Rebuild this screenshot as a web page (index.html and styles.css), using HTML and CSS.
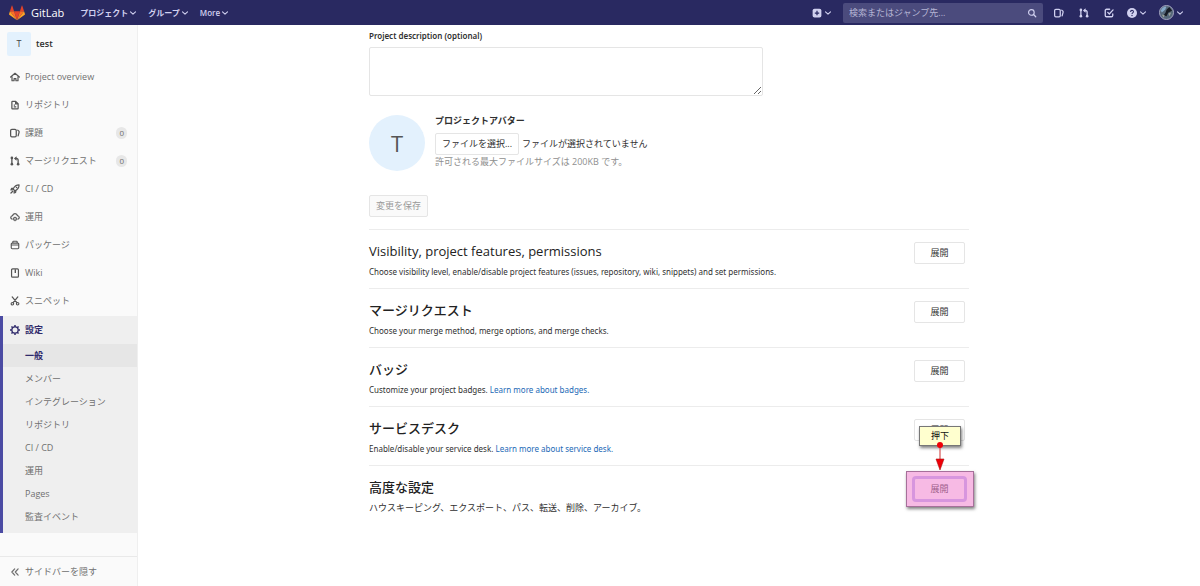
FILE: index.html
```
<!DOCTYPE html>
<html lang="ja">
<head>
  <meta charset="UTF-8" />
  <meta name="viewport" content="width=device-width, initial-scale=1.0"/>
  <title>一般 · 設定 · test · GitLab</title>
  <link rel="stylesheet" href="styles.css">
</head>
<body>
<!-- shared icons -->
<svg class="sprite" aria-hidden="true">
  <symbol id="chevron" viewBox="0 0 8 8"><path d="M1.5 2.8 4 5.2l2.5-2.4" fill="none" stroke="currentColor" stroke-width="1.1" stroke-linecap="round" stroke-linejoin="round"/></symbol>
  <symbol id="issues" viewBox="0 0 16 16"><path d="M3 2h5a2 2 0 0 1 2 2v8a2 2 0 0 1-2 2H3a2 2 0 0 1-2-2V4a2 2 0 0 1 2-2zm9.500 1.500c1.700 1 2.500 2 2 3.500l-1.500 5.500" fill="none" stroke="currentColor" stroke-width="2" stroke-linecap="round"/></symbol>
  <symbol id="merge" viewBox="0 0 16 16"><path d="M3 4v8M8 4h2.500A2.500 2.500 0 0 1 13 6.500V12" fill="none" stroke="currentColor" stroke-width="2.100"/><path d="M10.500 .5v7L6.300 4z" fill="currentColor"/><circle cx="3" cy="3" r="2.100" fill="currentColor"/><circle cx="3" cy="13" r="2.100" fill="currentColor"/><circle cx="13" cy="13" r="2.100" fill="currentColor"/></symbol>
</svg>

<header class="navbar">
  <a href="#" class="brand">
    <svg viewBox="0 0 36 36" aria-hidden="true">
      <path d="M18 34.400 24.600 14H11.400z" fill="#e24329"/>
      <path d="M18 34.400 11.400 14H2.100zM18 34.400 24.600 14h9.300z" fill="#fc6d26"/>
      <path d="M2.100 14 .1 20.200c-.2.600 0 1.200.5 1.500L18 34.400zM33.900 14l2 6.200c.2.600 0 1.200-.5 1.500L18 34.400z" fill="#fca326"/>
      <path d="M2.100 14h9.300l-4-12.300c-.2-.6-1.100-.6-1.300 0zM33.900 14h-9.300l4-12.300c.2-.6 1.100-.6 1.300 0z" fill="#e24329"/>
    </svg>
    <span>GitLab</span>
  </a>
  <nav class="menu">
    <a href="#">プロジェクト <svg class="chevron"><use href="#chevron"/></svg></a>
    <a href="#">グループ <svg class="chevron"><use href="#chevron"/></svg></a>
    <a href="#">More <svg class="chevron"><use href="#chevron"/></svg></a>
  </nav>
  <div class="tools">
    <a href="#" class="tool" aria-label="New">
      <svg class="icon" viewBox="0 0 16 16"><rect x="1" y="1" width="14" height="14" rx="3" fill="currentColor"/><path d="M8 4.500v7M4.500 8h7" stroke="#292961" stroke-width="2"/></svg>
      <svg class="chevron"><use href="#chevron"/></svg>
    </a>
    <form class="search">
      <input type="search" placeholder="検索またはジャンプ先..." aria-label="検索">
      <svg class="icon" viewBox="0 0 16 16"><circle cx="7" cy="7" r="4.500" fill="none" stroke="currentColor" stroke-width="1.800"/><path d="m10.500 10.500 3.500 3.500" stroke="currentColor" stroke-width="2" stroke-linecap="round"/></svg>
    </form>
    <a href="#" class="tool" aria-label="課題"><svg class="icon"><use href="#issues"/></svg></a>
    <a href="#" class="tool" aria-label="マージリクエスト"><svg class="icon"><use href="#merge"/></svg></a>
    <a href="#" class="tool" aria-label="Todo"><svg class="icon" viewBox="0 0 16 16"><path d="M9 2H4a2 2 0 0 0-2 2v8a2 2 0 0 0 2 2h8a2 2 0 0 0 2-2V9.500M6 7l2.500 2.500L14.500 3" fill="none" stroke="currentColor" stroke-width="2.100" stroke-linecap="round"/></svg></a>
    <div class="tool-group">
      <a href="#" class="tool" aria-label="Help">
        <svg class="icon" viewBox="0 0 16 16"><circle cx="8" cy="8" r="8" fill="currentColor"/><path d="M5.700 6.200C5.700 3 10.300 3 10.300 6.100 10.300 7.700 8 7.700 8 9.500" fill="none" stroke="#292961" stroke-width="1.700"/><circle cx="8" cy="11.900" r="1.100" fill="#292961"/></svg>
        <svg class="chevron"><use href="#chevron"/></svg>
      </a>
      <a href="#" class="tool" aria-label="User">
        <svg class="user" viewBox="0 0 16 16"><circle cx="8" cy="8" r="7.500" fill="#56687a" stroke="#a9a9c4"/><path d="M2 6c1-3 3-4.500 6-4.500L6.500 5 3 8z" fill="#86abcc"/><path d="M8 5l3-3 3 4-4 2-2 4-3-1 2-3z" fill="#171c25"/><path d="m3 10 3 1-1 2.500zM10 9l3-1-2 4z" fill="#a0a49a"/></svg>
        <svg class="chevron"><use href="#chevron"/></svg>
      </a>
    </div>
  </div>
</header>

<div class="page">
  <aside class="sidebar">
    <a href="#" class="project"><span class="project-avatar">T</span><strong>test</strong></a>
    <ul class="side-list">
      <li><a href="#"><svg class="icon" viewBox="0 0 16 16"><path d="m1 8 7-6 7 6M3.200 7v7h3.300v-3.500h3V14h3.300V7" fill="none" stroke="currentColor" stroke-width="1.900" stroke-linecap="round" stroke-linejoin="round"/></svg>Project overview</a></li>
      <li><a href="#"><svg class="icon" viewBox="0 0 16 16"><path d="M4 2h5l4 4v7a1 1 0 0 1-1 1H4a1 1 0 0 1-1-1V3a1 1 0 0 1 1-1zM6 8h2M6 11h4M9 2v4h4" fill="none" stroke="currentColor" stroke-width="2"/></svg>リポジトリ</a></li>
      <li><a href="#"><svg class="icon"><use href="#issues"/></svg>課題<span class="count">0</span></a></li>
      <li><a href="#"><svg class="icon"><use href="#merge"/></svg>マージリクエスト<span class="count">0</span></a></li>
      <li><a href="#"><svg class="icon" viewBox="0 0 16 16"><path d="M14.500 1.500C10 1.500 7 4 5 8l3 3c4-2 6.500-5 6.500-9.500zM6 6.500 2.500 7 1.500 9.500 5 9M9.500 10 9 13.500l-2.500 1L7 11" fill="none" stroke="currentColor" stroke-width="1.900" stroke-linejoin="round"/><circle cx="10.500" cy="5.500" r="1.300" fill="currentColor"/><path d="m4.500 11.500-3 3" stroke="currentColor" stroke-width="2" stroke-linecap="round"/></svg>CI / CD</a></li>
      <li><a href="#"><svg class="icon" viewBox="0 0 16 16"><path d="M3.500 11.500C0 10.500 1 6 4 6c1-4.500 7-4.500 8 0 3 0 4 4.500.5 5.500" fill="none" stroke="currentColor" stroke-width="1.900" stroke-linecap="round"/><circle cx="8" cy="11" r="2.200" fill="none" stroke="currentColor" stroke-width="1.900"/><path d="M8 7.500v1.500M8 13v1.800M4.800 9.500l1.400.7M11.200 9.500l-1.400.7" stroke="currentColor" stroke-width="1.300"/></svg>運用</a></li>
      <li><a href="#"><svg class="icon" viewBox="0 0 16 16"><path d="M3.500 5h9A1.500 1.500 0 0 1 14 6.500v6a1.500 1.500 0 0 1-1.500 1.500h-9A1.500 1.500 0 0 1 2 12.500v-6A1.500 1.500 0 0 1 3.500 5zM4.500 5V3a1 1 0 0 1 1-1h5a1 1 0 0 1 1 1v2M2 8h12" fill="none" stroke="currentColor" stroke-width="1.800"/></svg>パッケージ</a></li>
      <li><a href="#"><svg class="icon" viewBox="0 0 16 16"><rect x="2.500" y="1.500" width="11" height="13" rx="1.500" fill="none" stroke="currentColor" stroke-width="1.900"/><path d="M8.500 2v6" stroke="currentColor" stroke-width="2.200"/></svg>Wiki</a></li>
      <li><a href="#"><svg class="icon" viewBox="0 0 16 16"><path d="m3.500 1.500 7.500 9M12.500 1.500 5 10.500" stroke="currentColor" stroke-width="2" stroke-linecap="round"/><circle cx="3.800" cy="12.300" r="2" fill="none" stroke="currentColor" stroke-width="1.800"/><circle cx="12.200" cy="12.300" r="2" fill="none" stroke="currentColor" stroke-width="1.800"/></svg>スニペット</a></li>
      <li class="active">
        <a href="#"><svg class="icon" viewBox="0 0 16 16"><circle cx="8" cy="8" r="5" fill="none" stroke="currentColor" stroke-width="2"/><path d="M8 0v3M8 13v3M0 8h3M13 8h3M2.300 2.300l2.200 2.200M11.500 11.500l2.200 2.200M2.300 13.700l2.200-2.200M11.500 4.500l2.200-2.200" stroke="currentColor" stroke-width="2.400"/></svg>設定</a>
        <ul class="sub-list">
          <li class="current"><a href="#">一般</a></li>
          <li><a href="#">メンバー</a></li>
          <li><a href="#">インテグレーション</a></li>
          <li><a href="#">リポジトリ</a></li>
          <li><a href="#">CI / CD</a></li>
          <li><a href="#">運用</a></li>
          <li><a href="#">Pages</a></li>
          <li><a href="#">監査イベント</a></li>
        </ul>
      </li>
    </ul>
    <button type="button" class="collapse"><svg class="icon" viewBox="0 0 16 16"><path d="M7.500 3 3 8l4.500 5M13 3 8.500 8l4.500 5" fill="none" stroke="currentColor" stroke-width="2" stroke-linecap="round" stroke-linejoin="round"/></svg>サイドバーを隠す</button>
  </aside>

  <main class="content">
    <form class="general">
      <label for="description">Project description (optional)</label>
      <textarea id="description"></textarea>
      <div class="avatar-row">
        <div class="avatar">T</div>
        <div class="avatar-form">
          <h5>プロジェクトアバター</h5>
          <div class="file-row">
            <button type="button" class="btn">ファイルを選択...</button>
            <span>ファイルが選択されていません</span>
          </div>
          <p class="hint">許可される最大ファイルサイズは 200KB です。</p>
        </div>
      </div>
      <button type="submit" class="btn save" disabled>変更を保存</button>
    </form>

    <section class="settings">
      <div>
        <h4>Visibility, project features, permissions</h4>
        <p>Choose visibility level, enable/disable project features (issues, repository, wiki, snippets) and set permissions.</p>
      </div>
      <button type="button" class="btn expand">展開</button>
    </section>
    <section class="settings">
      <div>
        <h4>マージリクエスト</h4>
        <p>Choose your merge method, merge options, and merge checks.</p>
      </div>
      <button type="button" class="btn expand">展開</button>
    </section>
    <section class="settings">
      <div>
        <h4>バッジ</h4>
        <p>Customize your project badges. <a href="#">Learn more about badges.</a></p>
      </div>
      <button type="button" class="btn expand">展開</button>
    </section>
    <section class="settings">
      <div>
        <h4>サービスデスク</h4>
        <p>Enable/disable your service desk. <a href="#">Learn more about service desk.</a></p>
      </div>
      <button type="button" class="btn expand">展開</button>
    </section>
    <section class="settings">
      <div>
        <h4>高度な設定</h4>
        <p class="ja">ハウスキーピング、エクスポート、パス、転送、削除、アーカイブ。</p>
      </div>
      <div class="target">
        <button type="button" class="btn expand focused">展開</button>
        <div class="highlight"></div>
        <div class="callout">押下</div>
        <svg class="arrow" viewBox="0 0 12 30" aria-hidden="true"><path d="M6 4v16" stroke="#c33" stroke-width="1"/><circle cx="6" cy="4" r="3" fill="#f00008"/><path d="M2 18h8L6 29z" fill="#f00008" stroke="#a11" stroke-width=".6"/></svg>
      </div>
    </section>
  </main>
</div>
</body>
</html>
```
FILE: styles.css
```
* {
  box-sizing: border-box;
}
body {
  font-family: "Open Sans", "Noto Sans CJK JP", sans-serif;
  font-size: 9px;
  line-height: 12px;
  color: #303030;
  background: #fff;
  margin: 0;
  min-height: 100vh;
  display: flex;
  flex-direction: column;
}
a {
  color: #1b69b6;
  text-decoration: none;
}
h4, h5, p, ul {
  margin: 0;
  padding: 0;
}
ul {
  list-style: none;
}
button, input, textarea {
  font: inherit;
  color: inherit;
}
.sprite {
  display: none;
}
.icon {
  width: 10px;
  height: 10px;
  flex-shrink: 0;
}
.chevron {
  width: 8px;
  height: 8px;
}

/* top bar */
.navbar {
  background: #292961;
  color: #d1d1f0;
  height: 25px;
  padding: 0 16px 0 9px;
  display: flex;
  align-items: center;
}
.navbar a {
  color: inherit;
}
.brand {
  display: flex;
  align-items: center;
  gap: 6px;
  font-size: 11px;
}
.brand svg {
  width: 16px;
  height: 16px;
}
.brand span {
  color: #fff;
}
.menu {
  display: flex;
  gap: 11px;
  margin-left: 16px;
  font-size: 8px;
  font-weight: 600;
}
.menu a {
  display: flex;
  align-items: center;
  gap: 1px;
}
.tools {
  display: flex;
  align-items: center;
  gap: 15px;
  margin-left: auto;
}
.tool {
  display: flex;
  align-items: center;
  gap: 2px;
}
.tool-group {
  display: flex;
  align-items: center;
  gap: 12px;
  margin-left: -2px;
}
.user {
  width: 15px;
  height: 15px;
}
.search {
  width: 200px;
  height: 20px;
  margin: 0 -4px;
  padding: 0 6px;
  display: flex;
  align-items: center;
  background: #4b4b7d;
  border-radius: 2px;
}
.search input {
  flex: 1;
  min-width: 0;
  padding: 0;
  border: 0;
  outline: 0;
  background: none;
}
.search input::placeholder {
  color: #b5b5d4;
  opacity: 1;
}

.page {
  flex: 1;
  display: flex;
}

/* sidebar */
.sidebar {
  width: 138px;
  background: #fafafa;
  border-right: 1px solid #efefef;
  color: #707070;
  display: flex;
  flex-direction: column;
}
.sidebar a {
  color: inherit;
}
.project {
  display: flex;
  align-items: center;
  gap: 5px;
  padding: 7px;
}
.project-avatar {
  width: 24px;
  height: 24px;
  border-radius: 2px;
  background: #e3f1fd;
  color: #444;
  display: flex;
  align-items: center;
  justify-content: center;
}
.project strong {
  color: #2e2e2e;
  font-weight: 600;
}
.side-list > li > a {
  display: flex;
  align-items: center;
  gap: 5px;
  height: 28px;
  padding: 0 10px;
}
.side-list .icon {
  color: #555;
}
.side-list .active .icon {
  color: #2f2a6b;
}
.count {
  margin-left: auto;
  padding: 0 3px;
  border-radius: 6px;
  background: #e7e7e7;
  font-size: 8px;
}
.side-list > .active {
  margin-top: 1px;
  background: #efefef;
  box-shadow: inset 3px 0 0 #4b4ba3;
}
.side-list > .active > a,
.sub-list .current a {
  color: #2f2a6b;
  font-weight: 600;
}
.sub-list {
  padding-bottom: 5px;
}
.sub-list a {
  display: block;
  padding: 0 10px 0 25px;
  line-height: 23px;
}
.sub-list .current {
  margin-left: 3px;
  background: #e6e6e6;
}
.sub-list .current a {
  padding-left: 22px;
}
.collapse {
  margin-top: auto;
  height: 30px;
  display: flex;
  align-items: center;
  gap: 5px;
  padding: 0 10px;
  border: 0;
  border-top: 1px solid #e9e9e9;
  background: none;
}

/* settings page */
.content {
  width: 100%;
  max-width: 600px;
  margin: 0 auto;
}
.general {
  padding: 5px 0 12px;
}
.general label {
  display: block;
  font-family: "Noto Sans", sans-serif;
  font-size: 8px;
  font-weight: 600;
}
.general textarea {
  display: block;
  width: 394px;
  max-width: 100%;
  height: 49px;
  margin-top: 5px;
  border: 1px solid #e5e5e5;
  border-radius: 2px;
  background: #fff;
}
.avatar-row {
  display: flex;
  gap: 10px;
  margin: 19px 0 24px;
}
.avatar {
  width: 56px;
  height: 56px;
  border-radius: 50%;
  background: #e3f1fd;
  color: #555;
  font-size: 22px;
  display: flex;
  align-items: center;
  justify-content: center;
}
.avatar-form h5 {
  font-size: 9px;
  font-weight: 600;
}
.file-row {
  display: flex;
  align-items: center;
  gap: 3px;
  margin: 6px 0 1px;
}
.hint {
  color: #8f8f8f;
}
.btn {
  height: 22px;
  padding: 0 6px;
  border: 1px solid #e5e5e5;
  border-radius: 2px;
  background: #fff;
}
.save {
  display: block;
  background: #fafafa;
  color: #999;
}
.settings {
  display: flex;
  justify-content: space-between;
  align-items: flex-start;
  min-height: 59px;
  padding: 12px 4px 0 0;
  border-top: 1px solid #ececec;
}
.settings h4 {
  font-size: 13px;
  font-weight: 500;
  line-height: 18px;
  color: #222;
}
.settings p {
  margin-top: 6px;
  font-family: "Noto Sans", "Noto Sans CJK JP", sans-serif;
  font-size: 8px;
}
.settings .ja {
  font-size: 9px;
}
.expand {
  width: 51px;
}

/* step marker over the last button */
.target {
  position: relative;
}
.focused {
  display: block;
  border-color: #b9b0f2;
  box-shadow: 0 0 0 2px #b9b0f2;
}
.highlight {
  position: absolute;
  inset: -7px -9px -7px -8px;
  border: 1px solid #a6709a;
  background: rgba(240, 130, 205, 0.55);
  box-shadow: 1px 2px 3px rgba(0, 0, 0, 0.5);
  pointer-events: none;
}
.callout {
  position: absolute;
  left: 5px;
  bottom: 54px;
  width: 42px;
  border: 1px solid #777;
  background: #ffffcf;
  color: #111;
  line-height: 18px;
  text-align: center;
  box-shadow: 1px 2px 3px rgba(0, 0, 0, 0.5);
}
.arrow {
  position: absolute;
  left: 20px;
  bottom: 29px;
  width: 12px;
  height: 30px;
}
```
